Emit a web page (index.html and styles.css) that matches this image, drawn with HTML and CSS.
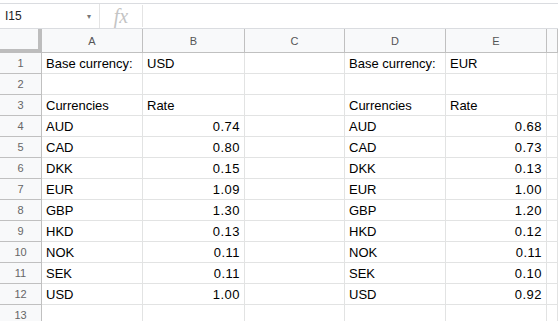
FILE: index.html
```html
<!DOCTYPE html>
<html>
<head>
    <title>Currencies</title>
    <link rel="stylesheet" href="styles.css">
</head>
<body>
    <!-- formula bar -->
    <div class="formula-bar">
        <div class="name-box">
            <span>I15</span>
            <span class="arrow">&#9662;</span>
        </div>
        <div class="fx">fx</div>
        <div class="formula"></div>
    </div>

    <div class="sheet">
        <div class="corner"></div>
        <div class="col-head">A</div>
        <div class="col-head">B</div>
        <div class="col-head">C</div>
        <div class="col-head">D</div>
        <div class="col-head">E</div>
        <div class="col-head"></div>

        <div class="row-head">1</div>
        <div class="cell">Base currency:</div><div class="cell">USD</div><div class="cell"></div>
        <div class="cell">Base currency:</div><div class="cell">EUR</div><div class="cell"></div>

        <div class="row-head">2</div>
        <div class="cell"></div><div class="cell"></div><div class="cell"></div>
        <div class="cell"></div><div class="cell"></div><div class="cell"></div>

        <div class="row-head">3</div>
        <div class="cell">Currencies</div><div class="cell">Rate</div><div class="cell"></div>
        <div class="cell">Currencies</div><div class="cell">Rate</div><div class="cell"></div>

        <div class="row-head">4</div>
        <div class="cell">AUD</div><div class="cell num">0.74</div><div class="cell"></div>
        <div class="cell">AUD</div><div class="cell num">0.68</div><div class="cell"></div>

        <div class="row-head">5</div>
        <div class="cell">CAD</div><div class="cell num">0.80</div><div class="cell"></div>
        <div class="cell">CAD</div><div class="cell num">0.73</div><div class="cell"></div>

        <div class="row-head">6</div>
        <div class="cell">DKK</div><div class="cell num">0.15</div><div class="cell"></div>
        <div class="cell">DKK</div><div class="cell num">0.13</div><div class="cell"></div>

        <div class="row-head">7</div>
        <div class="cell">EUR</div><div class="cell num">1.09</div><div class="cell"></div>
        <div class="cell">EUR</div><div class="cell num">1.00</div><div class="cell"></div>

        <div class="row-head">8</div>
        <div class="cell">GBP</div><div class="cell num">1.30</div><div class="cell"></div>
        <div class="cell">GBP</div><div class="cell num">1.20</div><div class="cell"></div>

        <div class="row-head">9</div>
        <div class="cell">HKD</div><div class="cell num">0.13</div><div class="cell"></div>
        <div class="cell">HKD</div><div class="cell num">0.12</div><div class="cell"></div>

        <div class="row-head">10</div>
        <div class="cell">NOK</div><div class="cell num">0.11</div><div class="cell"></div>
        <div class="cell">NOK</div><div class="cell num">0.11</div><div class="cell"></div>

        <div class="row-head">11</div>
        <div class="cell">SEK</div><div class="cell num">0.11</div><div class="cell"></div>
        <div class="cell">SEK</div><div class="cell num">0.10</div><div class="cell"></div>

        <div class="row-head">12</div>
        <div class="cell">USD</div><div class="cell num">1.00</div><div class="cell"></div>
        <div class="cell">USD</div><div class="cell num">0.92</div><div class="cell"></div>

        <div class="row-head">13</div>
        <div class="cell"></div><div class="cell"></div><div class="cell"></div>
        <div class="cell"></div><div class="cell"></div><div class="cell"></div>
    </div>
</body>
</html>
```

FILE: styles.css
```css
html, body {
    margin: 0;
    padding: 0;
    background: #fff;
    overflow: hidden;
}

body {
    font-family: Arial, 'Liberation Sans', sans-serif;
    color: #000;
}

.formula-bar {
    display: flex;
    height: 24px;
    margin-top: 3px;
    border-top: 1px solid #dadce0;
    border-bottom: 1px solid #dadce0;
    box-sizing: content-box;
}

.name-box {
    width: 100px;
    display: flex;
    align-items: center;
    justify-content: space-between;
    padding: 0 8px 0 5px;
    box-sizing: border-box;
    font-size: 12px;
    color: #222;
    border-right: 1px solid #e4e4e4;
}

.name-box .arrow {
    font-size: 8px;
    color: #777;
}

.fx {
    width: 43px;
    box-sizing: border-box;
    border-right: 1px solid #e4e4e4;
    font-family: 'Liberation Serif', serif;
    font-style: italic;
    font-size: 20px;
    color: #c4c4c4;
    text-align: center;
    line-height: 22px;
    margin: 1px 0;
}

.sheet {
    display: grid;
    grid-template-columns: 42px 101px 102px 100px 101px 101px 11px;
    grid-template-rows: 24px;
    grid-auto-rows: 21px;
    font-size: 13px;
}

.corner {
    background: #f8f9fa;
    border-right: 4px solid #bdbdbd;
    border-bottom: 4px solid #bdbdbd;
    box-sizing: border-box;
}

.col-head {
    background: #f8f9fa;
    border-right: 1px solid #c0c0c0;
    border-bottom: 1px solid #c0c0c0;
    box-sizing: border-box;
    color: #555;
    font-size: 11px;
    text-align: center;
    line-height: 24px;
}

.row-head {
    background: #f8f9fa;
    border-right: 1px solid #c0c0c0;
    border-bottom: 1px solid #c0c0c0;
    box-sizing: border-box;
    color: #666;
    font-size: 11px;
    text-align: center;
    line-height: 20px;
}

.cell {
    border-right: 1px solid #e2e3e3;
    border-bottom: 1px solid #e2e3e3;
    box-sizing: border-box;
    padding: 0 4px;
    line-height: 21px;
    white-space: nowrap;
    overflow: hidden;
}

.num {
    text-align: right;
    letter-spacing: 0.5px;
}
```
